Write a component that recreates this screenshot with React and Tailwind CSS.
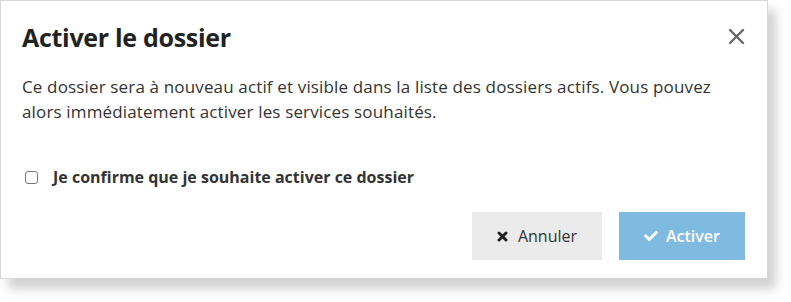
import { FaCheck } from "react-icons/fa";

const App = () => {
  return (
    <div className="h-[302px] w-[791px] bg-white font-['Open_Sans',sans-serif] text-[#222]">
      <div className="flex h-[279px] w-[768px] flex-col border border-[#d6d6d6] bg-white px-[21px] shadow-[8px_10px_10px_rgba(0,0,0,0.18)]">
        <div className="flex items-center justify-between pt-[19px]">
          <h1 className="text-[25px] font-bold leading-[34px] tracking-[-0.3px] text-[#222]">
            Activer le dossier
          </h1>
          <svg width="17" height="17" viewBox="0 0 17 17" className="mr-[1px] mt-[-2px]">
            <path d="M2 2 L15 15 M15 2 L2 15" stroke="#666" strokeWidth="2.4" strokeLinecap="round" />
          </svg>
        </div>

        <p className="mt-[20px] text-[17px] leading-[25px] tracking-[0.15px] text-[#333]">
          Ce dossier sera à nouveau actif et visible dans la liste des dossiers actifs. Vous pouvez
          <br />
          alors immédiatement activer les services souhaités.
        </p>

        <label className="mt-[41px] flex items-center">
          <span className="ml-[3px] h-[13px] w-[13px] rounded-[3px] border border-[#777] bg-white" />
          <span className="ml-[15px] text-[16px] font-bold text-[#333]">
            Je confirme que je souhaite activer ce dossier
          </span>
        </label>

        <div className="mt-[23px] flex justify-end gap-[17px] pr-[1px]">
          <button className="flex h-[48px] w-[130px] items-center justify-center gap-[10px] bg-[#ebebeb] text-[16px] text-[#333]">
            <svg width="11" height="11" viewBox="0 0 11 11">
              <path d="M2 2 L9 9 M9 2 L2 9" stroke="#222" strokeWidth="3" strokeLinecap="round" />
            </svg>
            Annuler
          </button>
          <button className="flex h-[48px] w-[126px] items-center justify-center gap-[8px] bg-[#7fbbe0] text-[16px] font-semibold text-white">
            <FaCheck className="h-[14px] w-[14px]" />
            Activer
          </button>
        </div>
      </div>
    </div>
  );
};

export default App;
